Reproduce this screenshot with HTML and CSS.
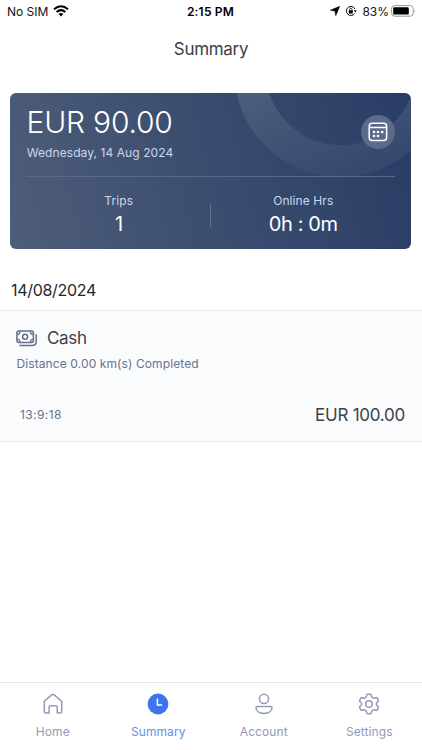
FILE: index.html
```html
<!DOCTYPE html>
<html lang="en">
<head>
<meta charset="utf-8">
<title>Summary</title>
<link rel="stylesheet" href="styles.css">
</head>
<body>
<div class="status">
  <div class="status-left"><span class="carrier">No SIM</span>
    <svg width="16" height="12" viewBox="0 0 16 12"><g fill="none" stroke="#000" stroke-width="2.1"><path d="M1 4.3Q8-1.8 15 4.3"/><path d="M3.6 7Q8 3.1 12.4 7"/></g><path d="M5.6 8.9Q8 6.9 10.4 8.9L8 11.4Z"/></svg>
  </div>
  <b class="clock">2:15 PM</b>
  <div class="status-right">
    <svg width="10" height="10" viewBox="0 0 10 10"><path d="M9.7.3 5.8 9.7 4.9 5.1.3 4.2Z" stroke="#000" stroke-width=".5" stroke-linejoin="round"/></svg>
    <svg class="lock" width="12" height="12" viewBox="0 0 12 12"><g fill="none" stroke="#000"><path d="M10 4A4.5 4.5 0 1 0 9.6 8.6"/><path d="M4.6 5.6V4.5a1.2 1.2 0 0 1 2.4 0v1.1" stroke-width=".8"/></g><path d="M3.8 5.3H7.8v3.1h-4zM8.8 5.2h3l-1.5 2.2Z"/></svg>
    <span class="percent">83%</span>
    <svg class="battery" width="25" height="12" viewBox="0 0 25 12"><rect x=".6" y=".6" width="21.6" height="10.6" rx="3" fill="none" stroke="#999"/><rect x="2.2" y="2.2" width="15.6" height="7.4" rx="1.2"/><path d="M23.6 4.2q1.4 1.7 0 3.5Z" fill="#999"/></svg>
  </div>
</div>
<h1 class="title">Summary</h1>
<section class="card">
  <svg class="ring" width="401" height="156" viewBox="0 0 401 156"><defs><linearGradient id="fade" x1="0" y1="0" x2="0" y2="84" gradientUnits="userSpaceOnUse"><stop stop-color="#fff" stop-opacity=".11"/><stop offset="1" stop-color="#fff" stop-opacity=".03"/></linearGradient></defs><circle cx="330.5" cy="-22.5" r="90.5" fill="none" stroke="url(#fade)" stroke-width="32"/></svg>
  <div class="card-head">
    <div><div class="total">EUR 90.00</div><div class="day">Wednesday, 14 Aug 2024</div></div>
    <div class="calendar"><svg width="20" height="20" viewBox="0 0 20 20"><g fill="none" stroke="#fff" stroke-width="1.5"><rect x="1.2" y="1.2" width="17.4" height="17.4" rx="3"/><path d="M1.2 5.5h17.4"/></g><g fill="#fff"><circle cx="6" cy="10" r="1.35"/><circle cx="10" cy="10" r="1.35"/><circle cx="14.2" cy="10" r="1.35"/><circle cx="6" cy="14" r="1.35"/><circle cx="10" cy="14" r="1.35"/></g></svg></div>
  </div>
  <div class="stats">
    <div class="stat"><span class="label">Trips</span><span class="value">1</span></div>
    <div class="stat"><span class="label">Online Hrs</span><span class="value">0h : 0m</span></div>
  </div>
</section>
<h2 class="date">14/08/2024</h2>
<section class="trip">
  <div class="method"><svg width="22" height="17" viewBox="0 0 22 17"><g fill="none" stroke="#65708c" stroke-width="1.5"><rect x=".9" y="1.1" width="16.5" height="11.4" rx="2"/><circle cx="9.1" cy="6.8" r="2.5"/><path d="M3.4 15.5h12.8q4 0 4-4V4.2"/><path d="M1 4.5q3 0 3-3M14.3 1.4q0 3 3 3M1 9.2q3 0 3 3M14.3 12.3q0-3 3-3" stroke-width="1.2"/></g></svg><span class="cash">Cash</span></div>
  <div class="distance">Distance 0.00 km(s) Completed</div>
  <div class="trip-foot"><span class="time">13:9:18</span><span class="amount">EUR 100.00</span></div>
</section>
<nav class="tabs">
  <div class="tab"><svg width="22" height="22" viewBox="0 0 22 22"><path d="M2.3 8.3 9.7 1.9q1.3-1 2.6 0l7.4 6.4v10.4q0 1.3-1.3 1.3h-3.2v-5.7q0-1.6-1.6-1.6H8.7q-1.6 0-1.6 1.6V20H3.6q-1.3 0-1.3-1.3Z"/></svg><span>Home</span></div>
  <div class="tab active"><svg width="22" height="22" viewBox="0 0 22 22"><circle cx="11" cy="11" r="10.4" fill="#3d75ec" stroke="none"/><path d="M10.4 5.5v6.6h4.7" stroke="#fff"/></svg><span>Summary</span></div>
  <div class="tab"><svg width="22" height="22" viewBox="0 0 22 22"><circle cx="11" cy="5.9" r="4.6"/><path d="M4.2 13.4h13.6q1.2 0 1.2 1.2c0 3.6-3.4 5.8-8 5.8s-8-2.2-8-5.8q0-1.2 1.2-1.2Z"/></svg><span>Account</span></div>
  <div class="tab"><svg width="22" height="22" viewBox="0 0 22 22"><circle cx="11" cy="11" r="3.3"/><path d="M9.7 1.3h2.6q.8 0 1 .8l.4 1.7q.2.6.8.9l.8.4q.6.3 1.1.1l1.5-.5q.8-.3 1.2.4l1.2 2.1q.4.7-.2 1.3l-1.2 1q-.5.5-.5 1.1v.8q0 .6.5 1.1l1.2 1q.6.6.2 1.3l-1.2 2.1q-.4.7-1.2.4l-1.5-.5q-.5-.2-1.1.1l-.8.4q-.6.3-.8.9l-.4 1.7q-.2.8-1 .8H9.7q-.8 0-1-.8l-.4-1.7q-.2-.6-.8-.9l-.8-.4q-.6-.3-1.1-.1l-1.5.5q-.8.3-1.2-.4l-1.2-2.1q-.4-.7.2-1.3l1.2-1q.5-.5.5-1.1v-.8q0-.6-.5-1.1l-1.2-1q-.6-.6-.2-1.3l1.2-2.1q.4-.7 1.2-.4l1.5.5q.5.2 1.1-.1l.8-.4q.6-.3.8-.9l.4-1.7q.2-.8 1-.8Z"/></svg><span>Settings</span></div>
</nav>
</body>
</html>
```
FILE: styles.css
```css
* { box-sizing: border-box; }
body { margin: 0; width: 422px; height: 750px; display: flex; flex-direction: column; overflow: hidden; background: #fff; font-family: Inter, "Liberation Sans", sans-serif; color: #3e4149; }
svg { display: block; flex: none; }
.status { height: 22px; padding: 0 6px 0 7px; display: grid; grid-template-columns: 1fr auto 1fr; align-items: center; color: #111; font-size: 12px; }
.status-left, .status-right { display: flex; align-items: center; }
.status-left { gap: 5px; }
.carrier { letter-spacing: 0; }
.clock { font-weight: 600; color: #000; font-size: 12px; letter-spacing: .2px; margin-right: 2px; }
.status-right { justify-content: flex-end; }
.lock { margin: 0 5px; }
.battery { margin-left: 2px; }
.title { margin: 13px 0 0; height: 28px; line-height: 28px; text-align: center; font-size: 17px; font-weight: 400; letter-spacing: -.3px; }
.card { position: relative; margin: 30px 11px 0 10px; height: 156px; border-radius: 6px; overflow: hidden; padding: 0 16px; color: #fff; background: linear-gradient(75deg, #4e5d78 0%, #3c4e70 46%, #293d65 100%); }
.ring { position: absolute; left: 0; top: 0; }
.card-head { position: relative; height: 84px; border-bottom: 1px solid #596987; display: flex; justify-content: space-between; }
.total { margin: 9px 0 0 .5px; font-size: 30px; line-height: 40px; font-weight: 350; letter-spacing: -.2px; }
.day { margin: 2px 0 0 .7px; font-size: 12px; line-height: 18px; color: #cbd6ec; letter-spacing: .08px; }
.calendar { width: 34px; height: 34px; margin-top: 22px; border-radius: 50%; background: #5c6b8b; display: grid; place-items: center; }
.stats { display: grid; grid-template-columns: 1fr 1fr; }
.stat { height: 72px; padding: 15px 0 0 1px; display: flex; flex-direction: column; align-items: center; }
.stat:first-child { background: linear-gradient(#60708f, #60708f) right 26px / 1px 24px no-repeat; }
.label { font-size: 12px; line-height: 18px; color: #cbd6ec; letter-spacing: .08px; }
.value { font-size: 20px; line-height: 29px; letter-spacing: -.4px; }
.date { margin: 29px 0 0 11px; height: 32px; line-height: 24px; font-size: 16px; font-weight: 400; color: #25272c; letter-spacing: -.3px; }
.trip { height: 132px; padding: 15px 17px 0 16px; border-top: 1px solid #e9ebef; border-bottom: 1px solid #e9ebef; background: #fafbfd; }
.method { height: 24px; display: flex; align-items: center; gap: 9px; }
.cash { font-size: 17px; letter-spacing: -.3px; }
.distance { height: 18px; margin: 5px 0 0 .5px; line-height: 18px; font-size: 12px; letter-spacing: .1px; color: #68728d; }
.trip-foot { display: flex; justify-content: space-between; align-items: center; margin-top: 29px; padding-left: 4px; height: 26px; }
.time { font-size: 12px; line-height: 18px; margin-bottom: 1px; color: #68728d; letter-spacing: .4px; }
.amount { font-size: 17px; letter-spacing: -.25px; }
.tabs { margin-top: auto; height: 68px; border-top: 1px solid #e9e9ec; display: grid; grid-template-columns: repeat(4, 1fr); }
.tab { padding-top: 10px; display: flex; flex-direction: column; align-items: center; color: #929bb5; font-size: 12px; line-height: 18px; gap: 8px; letter-spacing: .1px; }
.tab svg { fill: none; stroke: #929bb5; stroke-width: 1.5; stroke-linejoin: round; }
.active { color: #6690e7; }
```
